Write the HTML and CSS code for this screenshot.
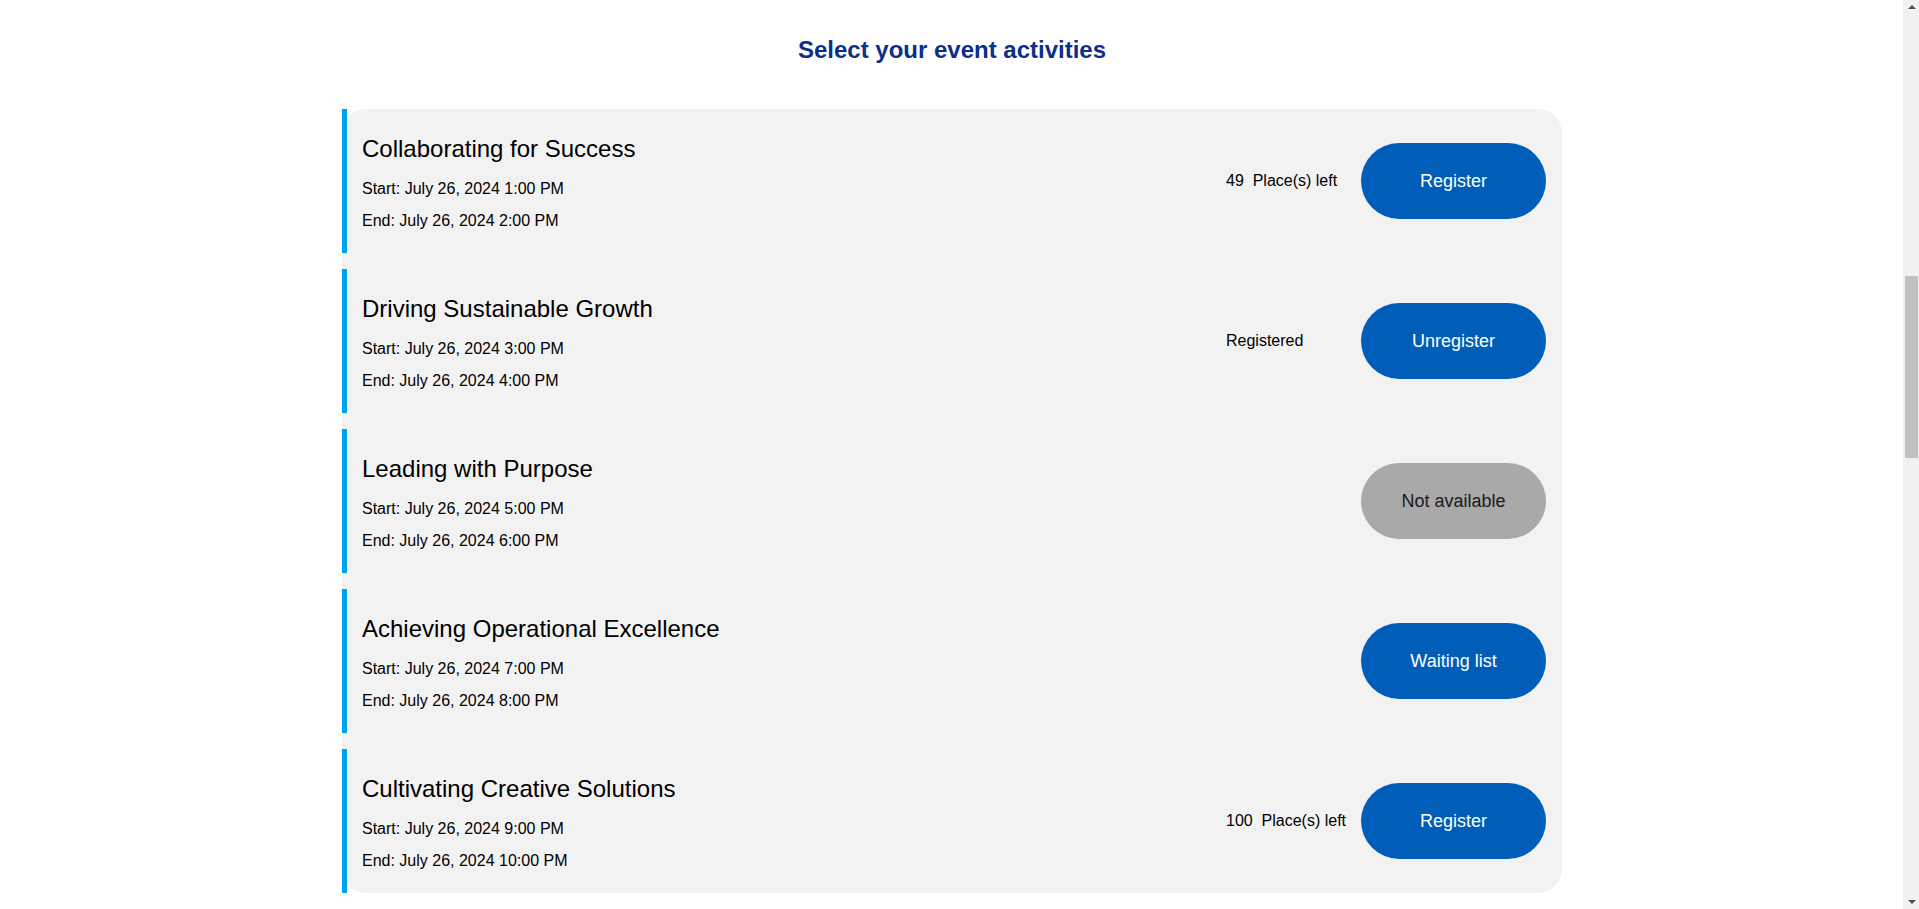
FILE: index.html
```html
<!DOCTYPE html>
<html lang="en">
<head>
<meta charset="utf-8">
<title>Select your event activities</title>
<link rel="stylesheet" href="styles.css">
</head>
<body>
<main class="page">
  <h2 class="page-title">Select your event activities</h2>
  <section class="activity-list">
    <article class="activity">
      <div class="activity-info">
        <h3 class="activity-title">Collaborating for Success</h3>
        <p class="activity-time">Start: July 26, 2024 1:00 PM</p>
        <p class="activity-time">End: July 26, 2024 2:00 PM</p>
      </div>
      <div class="activity-status">49&nbsp; Place(s) left</div>
      <button class="btn btn-primary" type="button">Register</button>
    </article>
    <article class="activity">
      <div class="activity-info">
        <h3 class="activity-title">Driving Sustainable Growth</h3>
        <p class="activity-time">Start: July 26, 2024 3:00 PM</p>
        <p class="activity-time">End: July 26, 2024 4:00 PM</p>
      </div>
      <div class="activity-status">Registered</div>
      <button class="btn btn-primary" type="button">Unregister</button>
    </article>
    <article class="activity">
      <div class="activity-info">
        <h3 class="activity-title">Leading with Purpose</h3>
        <p class="activity-time">Start: July 26, 2024 5:00 PM</p>
        <p class="activity-time">End: July 26, 2024 6:00 PM</p>
      </div>
      <div class="activity-status"></div>
      <button class="btn btn-disabled" type="button">Not available</button>
    </article>
    <article class="activity">
      <div class="activity-info">
        <h3 class="activity-title">Achieving Operational Excellence</h3>
        <p class="activity-time">Start: July 26, 2024 7:00 PM</p>
        <p class="activity-time">End: July 26, 2024 8:00 PM</p>
      </div>
      <div class="activity-status"></div>
      <button class="btn btn-primary" type="button">Waiting list</button>
    </article>
    <article class="activity">
      <div class="activity-info">
        <h3 class="activity-title">Cultivating Creative Solutions</h3>
        <p class="activity-time">Start: July 26, 2024 9:00 PM</p>
        <p class="activity-time">End: July 26, 2024 10:00 PM</p>
      </div>
      <div class="activity-status">100&nbsp; Place(s) left</div>
      <button class="btn btn-primary" type="button">Register</button>
    </article>
  </section>
</main>
<div class="scrollbar" aria-hidden="true">
  <span class="scroll-arrow scroll-arrow-up"></span>
  <span class="scroll-thumb"></span>
  <span class="scroll-arrow scroll-arrow-down"></span>
</div>
</body>
</html>
```

FILE: styles.css
```css
body {
  margin: 0;
  background: #ffffff;
  font-family: "Liberation Sans", Arial, sans-serif;
  color: #000000;
  overflow: hidden;
}

.page {
  display: flex;
  flex-direction: column;
  align-items: center;
  padding: 0 17px 0 2px;
}

.page-title {
  margin: 36px 0 45px;
  font-size: 24px;
  line-height: 28px;
  font-weight: 700;
  color: #0b2f8a;
  text-align: center;
}

.activity-list {
  width: 1220px;
  background: #f2f2f2;
  border-radius: 24px;
  display: flex;
  flex-direction: column;
  gap: 16px;
}

.activity {
  display: flex;
  align-items: center;
  border-left: 5px solid #00a3e3;
  padding: 0 16px 0 15px;
  height: 144px;
  box-sizing: border-box;
}

.activity-info {
  flex: 1;
  padding-top: 10px;
}

.activity-title {
  margin: 0 0 10px;
  font-size: 24px;
  line-height: 28px;
  font-weight: 400;
}

.activity-time {
  margin: 0;
  font-size: 16px;
  line-height: 32px;
}

.activity-status {
  width: 120px;
  margin-right: 15px;
  font-size: 16px;
  line-height: 20px;
  white-space: nowrap;
}

.btn {
  width: 185px;
  height: 76px;
  border: none;
  border-radius: 38px;
  font-family: "Liberation Sans", Arial, sans-serif;
  font-size: 18px;
  padding: 0;
  cursor: pointer;
}

.btn-primary {
  background: #005eb8;
  color: #ffffff;
}

.btn-disabled {
  background: #a9a9a9;
  color: #1a1a1a;
}

/* simulated browser scrollbar overlaying the right edge */
.scrollbar {
  position: fixed;
  top: 0;
  right: 0;
  width: 16px;
  height: 100%;
  background: #f1f1f1;
}

.scroll-thumb {
  position: absolute;
  left: 2px;
  right: 1px;
  top: 276px;
  height: 182px;
  background: #c1c1c1;
}

.scroll-arrow {
  position: absolute;
  left: 5px;
  width: 0;
  height: 0;
  border-left: 4px solid transparent;
  border-right: 4px solid transparent;
}

.scroll-arrow-up {
  top: 5px;
  border-bottom: 4px solid #505050;
}

.scroll-arrow-down {
  bottom: 5px;
  border-top: 4px solid #505050;
}
```
